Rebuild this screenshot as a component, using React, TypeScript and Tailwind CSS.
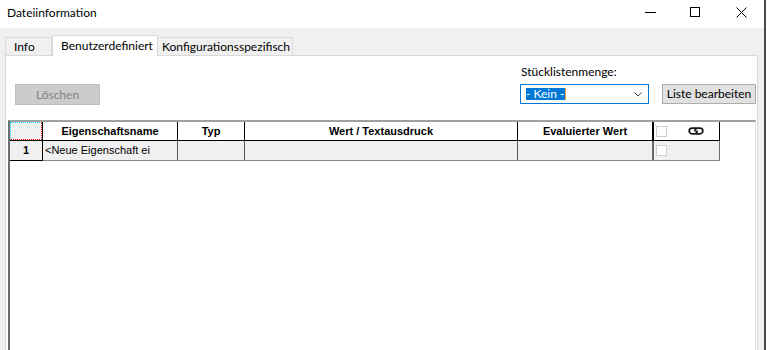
import React from "react";

const ui = { fontFamily: 'Lato, "Noto Sans", sans-serif' };
const grid = { fontFamily: '"Liberation Sans", Arial, sans-serif' };

function LinkIcon() {
  return (
    <svg width="18" height="8" viewBox="0 0 18 8" fill="none" stroke="#1a1a1a" strokeWidth="1.8" strokeLinecap="round">
      <path d="M9 1.2 H5 A2.8 2.8 0 0 0 5 6.8 H7.5 A2.6 2.6 0 0 0 10 4.2" />
      <path d="M8 3.8 A2.6 2.6 0 0 1 10.5 1.2 H13 A2.8 2.8 0 0 1 13 6.8 H9.5" />
    </svg>
  );
}

function Check() {
  return <div className="w-[11px] h-[11px] bg-white border border-[#cfcfcf]" />;
}

export default function App() {
  return (
    <div className="w-[767px] h-[350px] overflow-hidden flex bg-white" style={ui}>
      <div className="w-[764px] flex flex-col">
        {/* title bar */}
        <div className="h-[28px] bg-white flex items-start shrink-0">
          <div className="pl-[7px] pt-[5px] text-[12px] leading-[16px] text-black">Dateiinformation</div>
          <div className="ml-auto flex items-center h-[24px] pr-[17px]">
            <svg width="11" height="10" viewBox="0 0 11 10">
              <line x1="0" y1="5.5" x2="11" y2="5.5" stroke="#000" strokeWidth="1" />
            </svg>
            <svg width="10" height="10" viewBox="0 0 10 10" className="ml-[34px]">
              <rect x="0.5" y="0.5" width="9" height="9" fill="none" stroke="#000" strokeWidth="1" />
            </svg>
            <svg width="11" height="11" viewBox="0 0 11 11" className="ml-[36px]">
              <path d="M0.5 0.5 L10.5 10.5 M10.5 0.5 L0.5 10.5" stroke="#000" strokeWidth="1" />
            </svg>
          </div>
        </div>
        {/* body */}
        <div className="flex-1 bg-[#f0f0f0] flex flex-col pl-[5px] pr-[6px] min-h-0">
          {/* tabs */}
          <div className="h-[27px] flex items-end shrink-0 text-[12px] text-black">
            <div className="w-[47px] h-[18px] border-l border-t border-r border-[#d9d9d9] bg-[#f0f0f0] flex items-center pl-[8px] leading-[16px]">
              Info
            </div>
            <div className="w-[106px] h-[21px] -mb-px relative z-10 border-l border-t border-r border-[#d9d9d9] bg-white flex items-start pt-[2px] pl-[8px] leading-[16px]">
              Benutzerdefiniert
            </div>
            <div className="w-[135px] h-[18px] border-t border-r border-[#d9d9d9] bg-[#f0f0f0] flex items-center pl-[4px] leading-[16px]">
              Konfigurationsspezifisch
            </div>
          </div>
          {/* panel */}
          <div className="flex-1 bg-white border-l border-t border-r border-[#d9d9d9] flex flex-col min-h-0">
            <div className="h-[64px] flex shrink-0">
              <div className="ml-[9px] mt-[28px] w-[85px] h-[21px] bg-[#cccccc] border border-[#bfbfbf] flex items-center justify-center text-[12px] text-[#838383] leading-[16px]">
                Löschen
              </div>
              <div className="ml-auto mr-[1px] flex flex-col">
                <div className="mt-[8px] pl-[1px] text-[12px] leading-[16px] text-black">Stücklistenmenge:</div>
                <div className="mt-[4px] flex items-start">
                  <div className="w-[129px] h-[20px] border border-[#0078d7] bg-white flex items-center pl-[5px] pr-[5px]">
                    <span className="bg-[#0078d7] text-white text-[12px] leading-[12px] h-[12px] flex items-center pr-[1px]">- Kein -</span>
                    <span className="w-[1px] h-[12px] bg-[#e8a040]" />
                    <svg width="8" height="5" viewBox="0 0 8 5" className="ml-auto mr-[1px]">
                      <path d="M0.5 0.5 L4 4 L7.5 0.5" fill="none" stroke="#444" strokeWidth="1" />
                    </svg>
                  </div>
                  <div className="ml-[13px] w-[94px] h-[20px] bg-[#e1e1e1] border border-[#adadad] flex items-center justify-center text-[12px] leading-[16px] text-black">
                    Liste bearbeiten
                  </div>
                </div>
              </div>
            </div>
            {/* grid */}
            <div
              className="flex-1 ml-[2px] mr-[1px] border-l-2 border-t-2 border-r border-l-[#6e6e6e] border-t-[#a0a0a0] border-r-[#e0e0e0] bg-white"
              style={grid}
            >
              <div className="flex h-[19px] text-[11px] font-bold text-black">
                <div className="w-[33px] h-[19px] border-r border-b border-black bg-[#f0f0f0] flex">
                  <div className="flex-1 border border-dotted border-t-[#00d8e8] border-l-[#00d8e8] border-r-[#e00000] border-b-[#e00000]" />
                </div>
                <div className="w-[135px] border-r border-b border-black flex items-center justify-center">Eigenschaftsname</div>
                <div className="w-[67px] border-r border-b border-black flex items-center justify-center">Typ</div>
                <div className="w-[273px] border-r border-b border-black flex items-center justify-center">Wert / Textausdruck</div>
                <div className="w-[136px] border-r-2 border-b border-black flex items-center justify-center">Evaluierter Wert</div>
                <div className="w-[66px] border-r border-b border-black flex items-center pl-[2px]">
                  <Check />
                  <span className="ml-[20px]">
                    <LinkIcon />
                  </span>
                </div>
              </div>
              <div className="flex h-[20px] text-[11px] text-black">
                <div className="w-[33px] border-r border-b border-black bg-[#f0f0f0] flex items-center justify-center text-[11px] font-bold">1</div>
                <div className="w-[135px] border-r border-b border-r-[#555] border-b-[#8a8a8a] bg-[#f0f0f0] flex items-center pl-[2px] whitespace-nowrap overflow-hidden">
                  &lt;Neue Eigenschaft ei
                </div>
                <div className="w-[67px] border-r border-b border-r-[#555] border-b-[#8a8a8a] bg-[#f0f0f0]" />
                <div className="w-[273px] border-r border-b border-r-[#555] border-b-[#8a8a8a] bg-[#f0f0f0]" />
                <div className="w-[136px] border-r-2 border-b border-r-[#6a6a6a] border-b-[#8a8a8a] bg-[#f0f0f0]" />
                <div className="w-[66px] border-r border-b border-r-[#6a6a6a] border-b-[#8a8a8a] bg-[#f0f0f0] flex items-center pl-[2px]">
                  <Check />
                </div>
              </div>
            </div>
          </div>
        </div>
      </div>
      <div className="w-[2px] bg-[#4a4a4a]" />
      <div className="w-[1px] bg-white" />
    </div>
  );
}
